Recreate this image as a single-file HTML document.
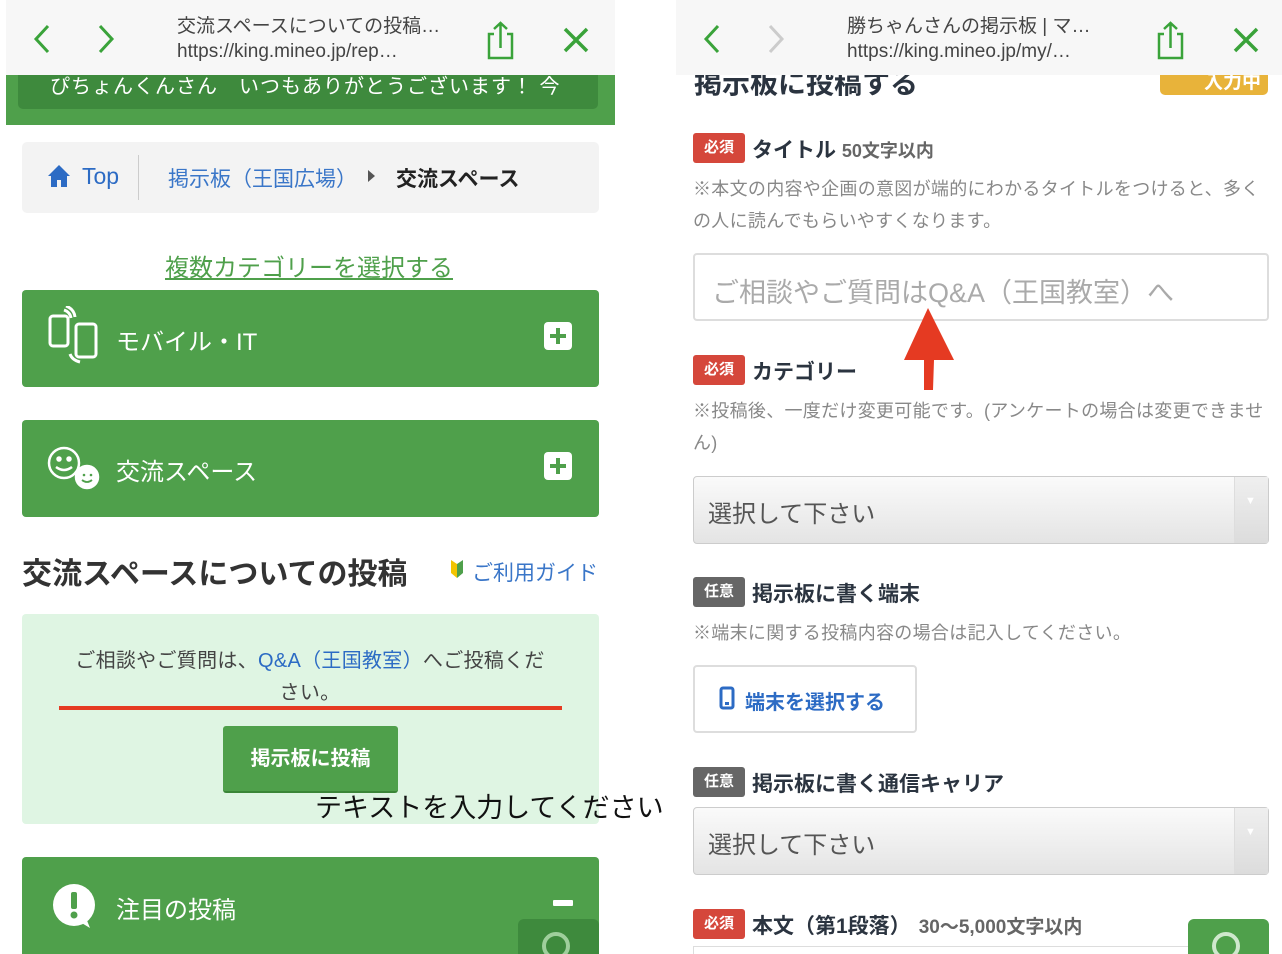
<!DOCTYPE html>
<html><head><meta charset="utf-8"><style>
*{margin:0;padding:0;box-sizing:border-box}
html,body{width:1282px;height:954px;overflow:hidden}
body{position:relative;background:#fff;font-family:"Liberation Sans","Noto Sans CJK JP",sans-serif;color:#333}
.a{position:absolute}
.bar{background:#f7f7f7;height:75px;top:0}
.bt{font-size:19px;color:#444;line-height:25px}
.g{background:#4fa04b;border-radius:4px}
.cat{color:#fff;font-size:24px}
.plus{width:28px;height:28px;background:#fff;border-radius:4px}
.plus:before,.plus:after{content:"";position:absolute;background:#4fa04b}
.plus:before{left:6px;top:12px;width:16px;height:4px}
.plus:after{left:12px;top:6px;width:4px;height:16px}
.badge{color:#fff;font-size:15px;font-weight:bold;border-radius:3px;width:52px;height:30px;line-height:30px;text-align:center}
.lbl{font-size:21px;font-weight:bold;color:#2b3440}
.note{font-size:18px;color:#888;line-height:32px;letter-spacing:0.3px}
.sel{border:1px solid #ccc;border-radius:4px;background:linear-gradient(#fafafa,#e4e4e4);height:68px}
.sel span{position:absolute;left:14px;top:17px;font-size:24px;color:#555}
.sel i{position:absolute;right:0;top:0;bottom:0;width:34px;background:linear-gradient(#efefef,#dcdcdc);border-left:1px solid #ddd}
.sel i:after{content:"▼";position:absolute;left:10px;top:18px;font-size:11px;color:#fff;font-style:normal}
</style></head><body>

<!-- LEFT -->
<div class="a bar" style="left:6px;width:609px"></div>
<svg class="a" style="left:30px;top:22px" width="90" height="34"><path d="M18 4 L6 17 L18 30" stroke="#3aa33a" stroke-width="3" fill="none"/><path d="M70 4 L82 17 L70 30" stroke="#3aa33a" stroke-width="3" fill="none"/></svg>
<div class="a bt" style="left:177px;top:14px">交流スペースについての投稿…<br>https://king.mineo.jp/rep…</div>
<svg class="a" style="left:486px;top:20px" width="30" height="40"><path d="M8 14 H3 V38 H26 V14 H21" stroke="#3aa33a" stroke-width="2.5" fill="none"/><path d="M14.5 28 V3 M8 9 L14.5 3 L21 9" stroke="#3aa33a" stroke-width="2.5" fill="none"/></svg>
<svg class="a" style="left:562px;top:26px" width="28" height="28"><path d="M3 3 L25 25 M25 3 L3 25" stroke="#3aa33a" stroke-width="3.5"/></svg>
<div class="a" style="left:6px;top:75px;width:609px;height:50px;background:#4fa04b"></div>
<div class="a" style="left:18px;top:75px;width:580px;height:34px;background:#3e8a3d;border-radius:0 0 5px 5px;color:#fff;font-size:20px;padding-left:32px;line-height:24px;letter-spacing:1px">ぴちょんくんさん　いつもありがとうございます！ 今</div>

<div class="a" style="left:22px;top:142px;width:577px;height:71px;background:#f3f3f3;border-radius:5px"></div>
<svg class="a" style="left:47px;top:164px" width="24" height="24"><path d="M12 1 L1 12 H4 V23 H10 V16 H14 V23 H20 V12 H23 Z" fill="#2c6bc4"/></svg>
<div class="a" style="left:82px;top:163px;font-size:23px;color:#2c6bc4">Top</div>
<div class="a" style="left:138px;top:155px;width:1px;height:45px;background:#ccc"></div>
<div class="a" style="left:168px;top:163px;font-size:21px;color:#3a76c8">掲示板（王国広場）</div>
<div class="a" style="left:368px;top:170px;width:0;height:0;border-left:7px solid #555;border-top:6px solid transparent;border-bottom:6px solid transparent"></div>
<div class="a" style="left:396px;top:163px;font-size:21px;font-weight:bold;color:#222">交流スペース</div>

<div class="a" style="left:165px;top:248px;font-size:24px;color:#4fa04b;text-decoration:underline">複数カテゴリーを選択する</div>

<div class="a g" style="left:22px;top:290px;width:577px;height:97px"></div>
<svg class="a" style="left:46px;top:306px" width="56" height="62" fill="none" stroke="#fff" stroke-width="3"><rect x="4" y="10" width="18" height="30" rx="3"/><rect x="30" y="18" width="20" height="33" rx="3"/><path d="M18 4 Q24 6 25 12 M20 0 Q28 3 29 11 M34 56 Q26 54 24 48"/></svg>
<div class="a cat" style="left:116px;top:322px">モバイル・IT</div>
<div class="a plus" style="left:544px;top:322px"></div>

<div class="a g" style="left:22px;top:420px;width:577px;height:97px"></div>
<svg class="a" style="left:46px;top:446px" width="56" height="46" fill="none" stroke="#fff" stroke-width="2.5"><circle cx="18" cy="17" r="15"/><circle cx="13" cy="13" r="1.5" fill="#fff"/><circle cx="23" cy="13" r="1.5" fill="#fff"/><path d="M10 21 Q18 27 26 21"/><circle cx="41" cy="31" r="11" fill="#fff"/><circle cx="38" cy="29" r="1.3" fill="#4fa04b" stroke="none"/><circle cx="45" cy="29" r="1.3" fill="#4fa04b" stroke="none"/><path d="M36 34 Q41 38 46 34" stroke="#4fa04b" stroke-width="1.8"/></svg>
<div class="a cat" style="left:116px;top:452px">交流スペース</div>
<div class="a plus" style="left:544px;top:452px"></div>

<div class="a" style="left:22px;top:549px;font-size:30px;font-weight:bold;color:#333">交流スペースについての投稿</div>
<svg class="a" style="left:449px;top:558px" width="16" height="22"><path d="M2 2 L8 6 V20 L2 15 Z" fill="#f2c400"/><path d="M14 2 L8 6 V20 L14 15 Z" fill="#4fa04b"/></svg>
<div class="a" style="left:472px;top:557px;font-size:21px;color:#3a76c8">ご利用ガイド</div>

<div class="a" style="left:22px;top:614px;width:577px;height:210px;background:#dff5e3;border-radius:4px"></div>
<div class="a" style="left:40px;top:645px;width:540px;text-align:center;font-size:20px;color:#444;line-height:32px;letter-spacing:0.3px">ご相談やご質問は、<span style="color:#2c6bc4">Q&amp;A（王国教室）</span>へご投稿くだ<br>さい。</div>
<div class="a" style="left:59px;top:706px;width:503px;height:4px;background:#e53a22"></div>
<div class="a" style="left:223px;top:726px;width:175px;height:67px;background:#4fa04b;border-radius:3px;border-bottom:2px solid #3a8537;color:#fff;font-size:20px;font-weight:bold;text-align:center;line-height:66px">掲示板に投稿</div>
<div class="a" style="left:315px;top:786px;font-size:27px;color:#111">テキストを入力してください</div>

<div class="a g" style="left:22px;top:857px;width:577px;height:97px;border-radius:4px 4px 0 0"></div>
<svg class="a" style="left:50px;top:882px" width="48" height="48"><circle cx="24" cy="23" r="21" fill="#fff"/><path d="M30 40 L40 46 L36 36Z" fill="#fff"/><rect x="21" y="10" width="6" height="17" rx="2" fill="#4fa04b"/><circle cx="24" cy="33" r="3.5" fill="#4fa04b"/></svg>
<div class="a cat" style="left:116px;top:890px">注目の投稿</div>
<div class="a" style="left:553px;top:900px;width:20px;height:6px;background:#fff;border-radius:1px"></div>
<div class="a" style="left:518px;top:919px;width:81px;height:35px;background:#3e8a3d;border-radius:6px 6px 0 0"></div>
<div class="a" style="left:542px;top:932px;width:28px;height:28px;border:4px solid #9fcf9c;border-radius:50%"></div>

<!-- RIGHT -->
<div class="a" style="left:694px;top:62px;font-size:28px;font-weight:bold;color:#2b3440">掲示板に投稿する</div>
<div class="a" style="left:1160px;top:55px;width:108px;height:40px;background:#e8b33a;border-radius:5px;color:#fff;font-size:19px;font-weight:bold;padding:12px 0 0 44px">入力中</div>
<div class="a bar" style="left:676px;width:606px"></div>
<svg class="a" style="left:700px;top:22px" width="90" height="34"><path d="M18 4 L6 17 L18 30" stroke="#3aa33a" stroke-width="3" fill="none"/><path d="M70 4 L82 17 L70 30" stroke="#ccc" stroke-width="3" fill="none"/></svg>
<div class="a bt" style="left:847px;top:14px">勝ちゃんさんの掲示板 | マ…<br>https://king.mineo.jp/my/…</div>
<svg class="a" style="left:1156px;top:20px" width="30" height="40"><path d="M8 14 H3 V38 H26 V14 H21" stroke="#3aa33a" stroke-width="2.5" fill="none"/><path d="M14.5 28 V3 M8 9 L14.5 3 L21 9" stroke="#3aa33a" stroke-width="2.5" fill="none"/></svg>
<svg class="a" style="left:1232px;top:26px" width="28" height="28"><path d="M3 3 L25 25 M25 3 L3 25" stroke="#3aa33a" stroke-width="3.5"/></svg>

<div class="a badge" style="left:693px;top:133px;background:#d5473b">必須</div>
<div class="a lbl" style="left:752px;top:134px">タイトル <span style="color:#666;font-size:18px">50文字以内</span></div>
<div class="a note" style="left:693px;top:173px">※本文の内容や企画の意図が端的にわかるタイトルをつけると、多く<br>の人に読んでもらいやすくなります。</div>
<div class="a" style="left:693px;top:253px;width:576px;height:68px;border:2px solid #ddd;border-radius:4px"></div>
<div class="a" style="left:712px;top:271px;font-size:27px;color:#aaa">ご相談やご質問はQ&amp;A（王国教室）へ</div>
<svg class="a" style="left:900px;top:306px" width="56" height="84"><path d="M28 2 L54 54 L34 54 L33 84 L24 84 L24 54 L4 54 Z" fill="#e53a22"/></svg>

<div class="a badge" style="left:693px;top:355px;background:#d5473b">必須</div>
<div class="a lbl" style="left:752px;top:356px">カテゴリー</div>
<div class="a note" style="left:693px;top:395px">※投稿後、一度だけ変更可能です。(アンケートの場合は変更できませ<br>ん)</div>
<div class="a sel" style="left:693px;top:476px;width:576px"><span>選択して下さい</span><i></i></div>

<div class="a badge" style="left:693px;top:577px;background:#666">任意</div>
<div class="a lbl" style="left:752px;top:578px">掲示板に書く端末</div>
<div class="a note" style="left:693px;top:617px">※端末に関する投稿内容の場合は記入してください。</div>
<div class="a" style="left:693px;top:665px;width:224px;height:68px;border:2px solid #ddd;border-radius:4px"></div>
<svg class="a" style="left:719px;top:686px" width="16" height="24"><rect x="2" y="2" width="12" height="20" rx="2" fill="none" stroke="#2c6bc4" stroke-width="3"/><rect x="6" y="16" width="4" height="3" fill="#2c6bc4"/></svg>
<div class="a" style="left:745px;top:686px;font-size:20px;font-weight:bold;color:#2c6bc4">端末を選択する</div>

<div class="a badge" style="left:693px;top:767px;background:#666">任意</div>
<div class="a lbl" style="left:752px;top:768px">掲示板に書く通信キャリア</div>
<div class="a sel" style="left:693px;top:807px;width:576px"><span>選択して下さい</span><i></i></div>

<div class="a badge" style="left:693px;top:909px;background:#d5473b">必須</div>
<div class="a lbl" style="left:752px;top:910px">本文（第1段落）<span style="color:#666;font-size:19px;margin-left:8px">30〜5,000文字以内</span></div>
<div class="a" style="left:693px;top:946px;width:500px;height:8px;border:1px solid #ddd;border-bottom:none"></div>
<div class="a" style="left:1188px;top:919px;width:81px;height:35px;background:#4fa04b;border-radius:6px 6px 0 0"></div>
<div class="a" style="left:1212px;top:932px;width:28px;height:28px;border:4px solid #cfe8cd;border-radius:50%"></div>
</body></html>
